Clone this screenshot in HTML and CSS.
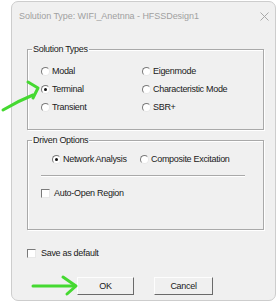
FILE: index.html
```html
<!DOCTYPE html>
<html>
<head>
<meta charset="utf-8">
<link rel="stylesheet" href="styles.css">
</head>
<body>
<div class="window">
  <div class="titlebar">
    <span class="title">Solution Type: WIFI_Anetnna - HFSSDesign1</span>
    <svg class="close" width="9" height="9" viewBox="0 0 9 9"><path d="M0.5 0.5 L8.5 8.5 M8.5 0.5 L0.5 8.5" stroke="#a8a8a8" stroke-width="1" fill="none"/></svg>
  </div>
  <div class="content">
    <fieldset class="group g1">
      <legend>Solution Types</legend>
      <div class="grid2">
        <div class="opt"><span class="radio"></span><span>Modal</span></div>
        <div class="opt"><span class="radio"></span><span>Eigenmode</span></div>
        <div class="opt"><span class="radio on"></span><span>Terminal</span></div>
        <div class="opt"><span class="radio"></span><span>Characteristic Mode</span></div>
        <div class="opt"><span class="radio"></span><span>Transient</span></div>
        <div class="opt"><span class="radio"></span><span>SBR+</span></div>
      </div>
    </fieldset>
    <fieldset class="group g2">
      <legend>Driven Options</legend>
      <div class="g2body">
        <div class="drow">
          <div class="opt net"><span class="radio on"></span><span>Network Analysis</span></div>
          <div class="opt"><span class="radio"></span><span>Composite Excitation</span></div>
        </div>
        <div class="sep"></div>
        <div class="opt chk"><span class="box"></span><span>Auto-Open Region</span></div>
      </div>
    </fieldset>
    <div class="opt chk save"><span class="box"></span><span>Save as default</span></div>
    <div class="buttons">
      <div class="btn">OK</div>
      <div class="btn">Cancel</div>
    </div>
  </div>
</div>
<svg class="arrows" width="280" height="304" viewBox="0 0 280 304">
  <g stroke="#45d931" stroke-width="3" fill="none" stroke-linecap="round" stroke-linejoin="round">
    <path d="M3 110 Q18 101 33 95"/>
    <path d="M28 82 L38 88 L33 98"/>
    <path d="M33 286 L74 286"/>
    <path d="M63 277 L76 286 L67 294"/>
  </g>
</svg>
</body>
</html>
```
FILE: styles.css
```css
html, body {
  margin: 0;
  padding: 0;
  background: #ffffff;
}
body {
  position: relative;
  width: 280px;
  height: 304px;
  overflow: hidden;
  font-family: "Liberation Sans", Arial, sans-serif;
  font-size: 9px;
  letter-spacing: -0.3px;
  color: #1a1a1a;
}
.window {
  box-sizing: border-box;
  margin: 1px 0 0 11px;
  width: 265px;
  height: 300px;
  background: #f0f0f0;
  border: 1px solid #cdcdcd;
  border-radius: 7px;
  display: flex;
  flex-direction: column;
}
.titlebar {
  height: 28px;
  display: flex;
  align-items: center;
  justify-content: space-between;
  padding: 0 6px 0 7px;
}
.title {
  font-size: 9px;
  letter-spacing: -0.05px;
  color: #a0a0a0;
}
.close {
  display: block;
}
.content {
  display: flex;
  flex-direction: column;
  padding: 13px 10px 0 15px;
}
.group {
  margin: 0;
  padding: 0;
  min-width: 0;
  border: 1px solid #a9a9a9;
  box-shadow: inset 1px 1px 0 #fff, 1px 1px 0 #fff;
  width: 237px;
  box-sizing: border-box;
}
.group legend {
  padding: 0 1px;
  margin-left: 4px;
  line-height: 12px;
  height: 12px;
}
.grid2 {
  display: grid;
  grid-template-columns: 101px auto;
  grid-auto-rows: 18px;
  padding: 7px 0 13px 13px;
}
.opt {
  display: flex;
  align-items: center;
  gap: 2px;
  height: 18px;
}
.radio {
  box-sizing: border-box;
  width: 9px;
  height: 9px;
  border-radius: 50%;
  background: #fff;
  border: 1px solid;
  border-color: #7a7a7a #e8e8e8 #e8e8e8 #7a7a7a;
  position: relative;
  flex: none;
}
.radio.on::after {
  content: "";
  position: absolute;
  left: 2px;
  top: 2px;
  width: 3px;
  height: 3px;
  border-radius: 50%;
  background: #111;
}
.g2 {
  margin-top: 4px;
}
.g2body {
  padding: 4px 18px 27px 13px;
}
.drow {
  display: flex;
  padding-left: 11px;
}
.net {
  width: 88px;
}
.sep {
  height: 1px;
  background: #a9a9a9;
  box-shadow: 0 1px 0 #fff;
  margin-top: 7px;
  width: 204px;
}
.chk {
  margin-top: 8px;
  gap: 4px;
}
.box {
  box-sizing: border-box;
  width: 9px;
  height: 9px;
  background: #fff;
  border: 1px solid;
  border-color: #7a7a7a #e8e8e8 #e8e8e8 #7a7a7a;
  flex: none;
}
.save {
  margin-top: 14px;
  gap: 5px;
}
.buttons {
  display: flex;
  gap: 20px;
  margin-top: 15px;
  padding-left: 50px;
}
.btn {
  box-sizing: border-box;
  width: 57px;
  height: 18px;
  display: flex;
  align-items: center;
  justify-content: center;
  border: 1px solid;
  border-color: #fdfdfd #6a6a6a #6a6a6a #fdfdfd;
}
.btn + .btn {
  width: 59px;
}
.arrows {
  position: absolute;
  left: 0;
  top: 0;
}
```
